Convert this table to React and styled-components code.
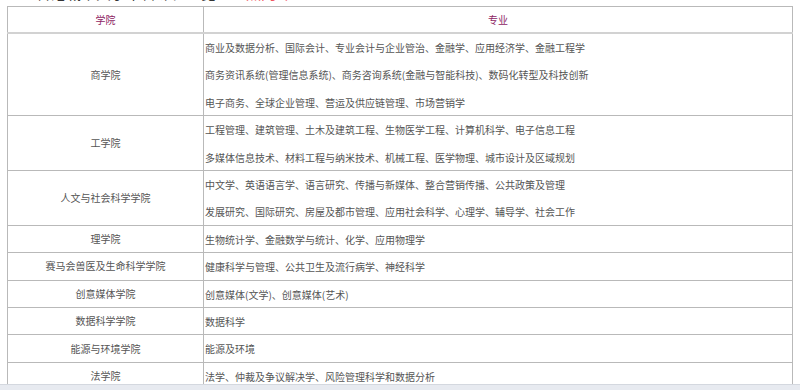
import React from "react";
import styled, { createGlobalStyle } from "styled-components";

const GlobalStyle = createGlobalStyle`
    body {
        margin: 0;
        background: #ffffff;
        font-family: "Noto Sans CJK SC", "Liberation Sans", sans-serif;
    }
`;

const rows = [
    {
        school: "商学院",
        majors: [
            "商业及数据分析、国际会计、专业会计与企业管治、金融学、应用经济学、金融工程学",
            "商务资讯系统(管理信息系统)、商务咨询系统(金融与智能科技)、数码化转型及科技创新",
            "电子商务、全球企业管理、营运及供应链管理、市场营销学",
        ],
    },
    {
        school: "工学院",
        majors: [
            "工程管理、建筑管理、土木及建筑工程、生物医学工程、计算机科学、电子信息工程",
            "多媒体信息技术、材料工程与纳米技术、机械工程、医学物理、城市设计及区域规划",
        ],
    },
    {
        school: "人文与社会科学学院",
        majors: [
            "中文学、英语语言学、语言研究、传播与新媒体、整合营销传播、公共政策及管理",
            "发展研究、国际研究、房屋及都市管理、应用社会科学、心理学、辅导学、社会工作",
        ],
    },
    { school: "理学院", majors: ["生物统计学、金融数学与统计、化学、应用物理学"] },
    { school: "赛马会兽医及生命科学学院", majors: ["健康科学与管理、公共卫生及流行病学、神经科学"] },
    { school: "创意媒体学院", majors: ["创意媒体(文学)、创意媒体(艺术)"] },
    { school: "数据科学学院", majors: ["数据科学"] },
    { school: "能源与环境学院", majors: ["能源及环境"] },
    { school: "法学院", majors: ["法学、仲裁及争议解决学、风险管理科学和数据分析"] },
];

const App = () => {
    return (
        <>
            <GlobalStyle />
            <Page>
                <Title>
                    <TitleText>
                        香港城市大学本科课程一览<Accent>热门专业</Accent>
                    </TitleText>
                </Title>
                <Table>
                    <colgroup>
                        <col style={{ width: 196 }} />
                        <col />
                    </colgroup>
                    <thead>
                        <tr>
                            <HeadCell>学院</HeadCell>
                            <HeadCell>专业</HeadCell>
                        </tr>
                    </thead>
                    <tbody>
                        {rows.map((row) => (
                            <tr key={row.school}>
                                <SchoolCell>{row.school}</SchoolCell>
                                <MajorCell>
                                    {row.majors.map((line) => (
                                        <MajorLine key={line}>{line}</MajorLine>
                                    ))}
                                </MajorCell>
                            </tr>
                        ))}
                    </tbody>
                </Table>
            </Page>
            <BottomBar />
        </>
    );
};

const Page = styled.div`
    padding: 0 8px 40px 7px;
`;

const Title = styled.div`
    height: 6px;
    overflow: hidden;
    padding-left: 29px;
`;

const TitleText = styled.div`
    margin-top: -15px;
    font-size: 15px;
    line-height: 15px;
    color: #333333;
    white-space: nowrap;
`;

const Accent = styled.span`
    margin-left: 30px;
    color: #f0555f;
`;

const Table = styled.table`
    width: 786px;
    border-collapse: collapse;
    table-layout: fixed;
    font-size: 10px;
    color: #555555;
`;

const HeadCell = styled.th`
    height: 25px;
    padding: 0;
    font-weight: normal;
    line-height: 25px;
    text-align: center;
    color: #8e2463;
    border: 1px solid #b9b9b9;
    border-bottom: 2px solid #d2d2d2;
`;

const SchoolCell = styled.td`
    padding: 0;
    text-align: center;
    vertical-align: middle;
    line-height: 14px;
    border: 1px solid #b9b9b9;
`;

const MajorCell = styled.td`
    padding: 0 0 0 1px;
    text-align: left;
    line-height: 14px;
    border: 1px solid #b9b9b9;
`;

const MajorLine = styled.div`
    line-height: 27.4px;
    white-space: nowrap;

    &:last-child {
        margin-bottom: -1px;
    }
`;

const BottomBar = styled.div`
    position: fixed;
    left: 0;
    right: 0;
    bottom: 0;
    height: 5px;
    background: #e7eaf0;
    border-top: 1px solid #d4d8df;
`;

export default App;
